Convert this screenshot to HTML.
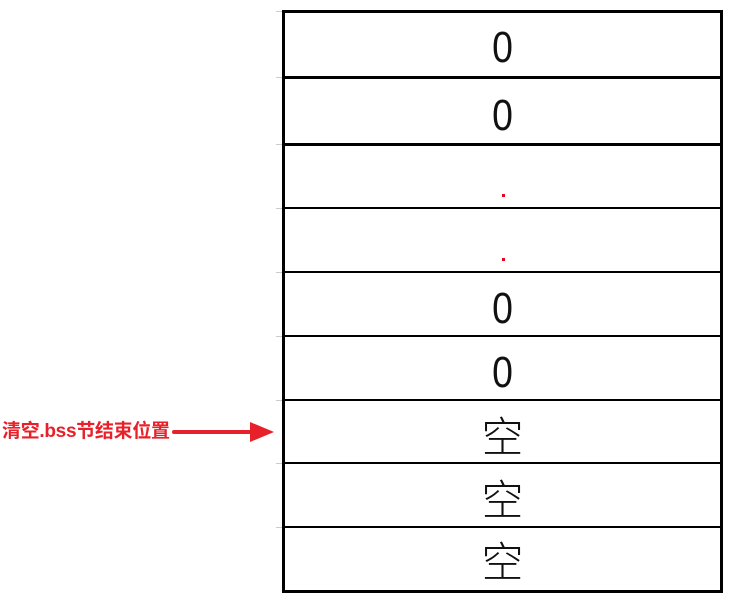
<!DOCTYPE html>
<html><head><meta charset="utf-8"><style>
body{margin:0;width:736px;height:608px;background:#fff;position:relative;overflow:hidden;font-family:"Liberation Sans","Noto Sans CJK SC",sans-serif}
.h{position:absolute;left:282px;width:441px;background:#000}
.t{position:absolute;left:282px;width:441px;text-align:center;font-size:44px;line-height:46px;color:#111;font-family:"DejaVu Sans ExtraLight","Liberation Sans",sans-serif;font-weight:200;transform:scaleX(0.85)}
.c{font-family:"Noto Sans CJK SC",sans-serif;font-size:42px;font-weight:300;transform:none}
.d{position:absolute;left:502px;width:3px;height:3px;background:#e8001c}
.k{position:absolute;left:276px;width:6px;height:1px;background:#ccc}
</style></head><body>
<div style="position:absolute;left:282px;top:10px;width:3px;height:583px;background:#000"></div>
<div style="position:absolute;left:720px;top:10px;width:3px;height:583px;background:#000"></div>
<div class="h" style="top:10px;height:3px"></div>
<div class="h" style="top:76px;height:3px"></div>
<div class="h" style="top:143px;height:3px"></div>
<div class="h" style="top:207px;height:1.5px"></div>
<div class="h" style="top:271px;height:1.5px"></div>
<div class="h" style="top:335px;height:1.5px"></div>
<div class="h" style="top:399px;height:1.5px"></div>
<div class="h" style="top:462px;height:1.5px"></div>
<div class="h" style="top:526px;height:1.5px"></div>
<div class="h" style="top:590px;height:3px"></div>
<div class="k" style="top:11px"></div><div class="k" style="top:77px"></div><div class="k" style="top:144px"></div><div class="k" style="top:208px"></div><div class="k" style="top:272px"></div><div class="k" style="top:336px"></div><div class="k" style="top:400px"></div><div class="k" style="top:463px"></div><div class="k" style="top:527px"></div>
<div class="t" style="top:25px">0</div>
<div class="t" style="top:93px">0</div>
<div class="d" style="top:194px"></div>
<div class="d" style="top:258px"></div>
<div class="t" style="top:286px">0</div>
<div class="t" style="top:350px">0</div>
<div class="t c" style="top:412px">空</div>
<div class="t c" style="top:475px">空</div>
<div class="t c" style="top:537px">空</div>
<div style="position:absolute;left:2px;top:419px;font-size:19px;font-weight:bold;color:#e8202a;line-height:26px;letter-spacing:-0.3px;font-family:'Liberation Sans','Noto Sans CJK SC',sans-serif">清空.bss节结束位置</div>
<svg style="position:absolute;left:0;top:0" width="736" height="608"><line x1="174" y1="432" x2="254" y2="432" stroke="#e8202a" stroke-width="4" stroke-linecap="round"/><polygon points="250,422 274,432 250,442" fill="#e8202a"/></svg>
</body></html>
